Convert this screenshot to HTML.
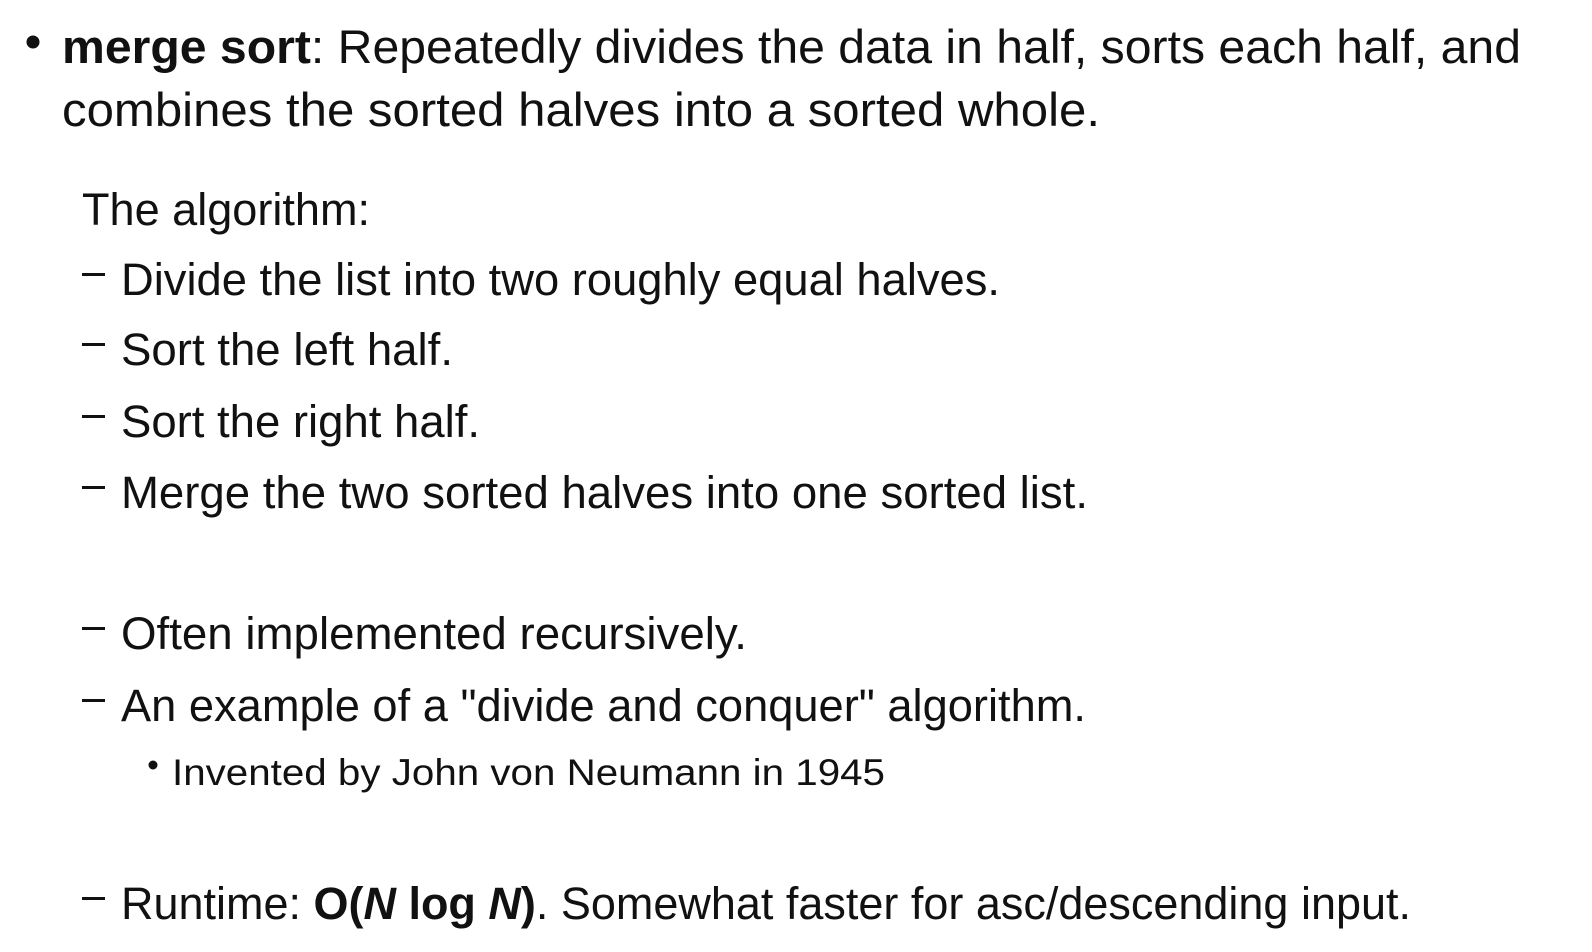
<!DOCTYPE html>
<html><head><meta charset="utf-8"><style>
html,body{margin:0;padding:0;background:#fff;width:1592px;height:952px;overflow:hidden}
svg{display:block}
text{font-family:"Liberation Sans",sans-serif;fill:#111}
</style></head><body>
<svg width="1592" height="952" viewBox="0 0 1592 952" xmlns="http://www.w3.org/2000/svg">
<circle cx="33" cy="42" r="6.5" fill="#111"/>
<text x="62" y="63" font-size="47" textLength="1459" lengthAdjust="spacingAndGlyphs"><tspan font-weight="bold">merge sort</tspan>: Repeatedly divides the data in half, sorts each half, and</text>
<text x="62" y="126" font-size="47" textLength="1038" lengthAdjust="spacingAndGlyphs">combines the sorted halves into a sorted whole.</text>
<text x="82" y="225" font-size="45" textLength="288" lengthAdjust="spacingAndGlyphs">The algorithm:</text>
<g fill="#111">
<rect x="82" y="273" width="23" height="3"/>
<rect x="82" y="343" width="23" height="3"/>
<rect x="82" y="415" width="23" height="3"/>
<rect x="82" y="486" width="23" height="3"/>
<rect x="82" y="627" width="23" height="3"/>
<rect x="82" y="699" width="23" height="3"/>
<rect x="82" y="897" width="23" height="3"/>
</g>
<text x="121" y="295" font-size="45" textLength="879" lengthAdjust="spacingAndGlyphs">Divide the list into two roughly equal halves.</text>
<text x="121" y="365" font-size="45" textLength="332" lengthAdjust="spacingAndGlyphs">Sort the left half.</text>
<text x="121" y="437" font-size="45" textLength="359" lengthAdjust="spacingAndGlyphs">Sort the right half.</text>
<text x="121" y="508" font-size="45" textLength="967" lengthAdjust="spacingAndGlyphs">Merge the two sorted halves into one sorted list.</text>
<text x="121" y="649" font-size="45" textLength="626" lengthAdjust="spacingAndGlyphs">Often implemented recursively.</text>
<text x="121" y="721" font-size="45" textLength="965" lengthAdjust="spacingAndGlyphs">An example of a "divide and conquer" algorithm.</text>
<circle cx="153" cy="765" r="4.5" fill="#111"/>
<text x="172" y="785" font-size="37" textLength="713" lengthAdjust="spacingAndGlyphs">Invented by John von Neumann in 1945</text>
<text x="121" y="919" font-size="45" textLength="1290" lengthAdjust="spacingAndGlyphs">Runtime: <tspan font-weight="bold">O(<tspan font-style="italic">N</tspan> log <tspan font-style="italic">N</tspan>)</tspan>.  Somewhat faster for asc/descending input.</text>
</svg>
</body></html>
